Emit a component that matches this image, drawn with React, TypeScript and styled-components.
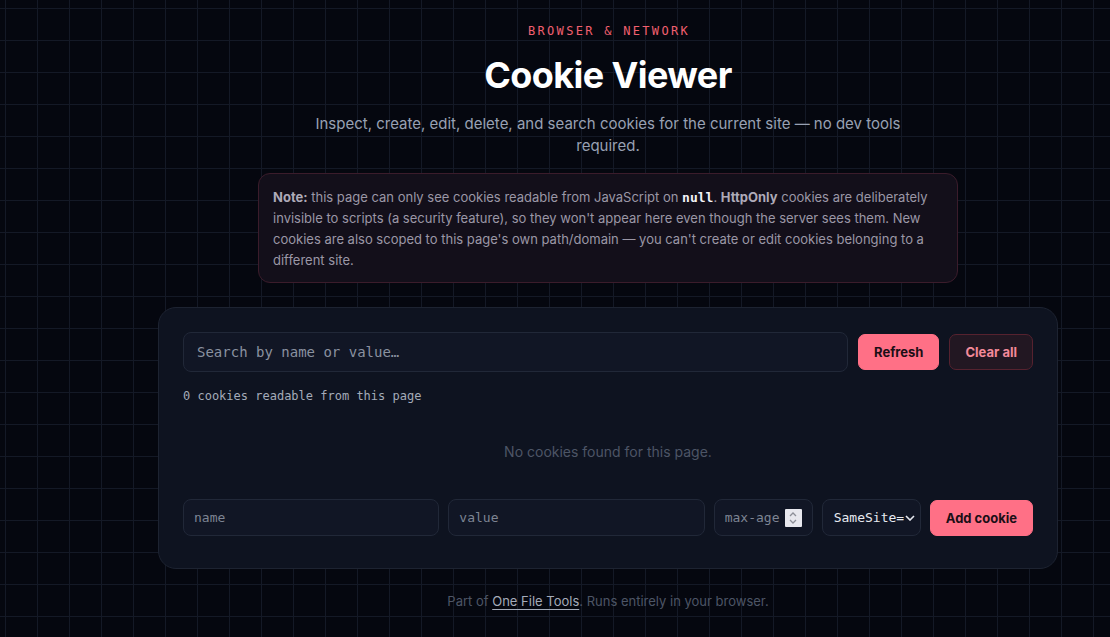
import React from "react";
import styled, { createGlobalStyle } from "styled-components";

const GlobalStyle = createGlobalStyle`
  html, body { margin: 0; padding: 0; }
  body {
    background-color: #05070f;
    background-image:
      linear-gradient(to right, #141926 1px, transparent 1px),
      linear-gradient(to bottom, #141926 1px, transparent 1px);
    background-size: 32px 32px;
    background-position: 5px 8px;
    color: #e6e9f0;
    font-family: Inter, "Noto Sans", sans-serif;
    min-height: 637px;
  }
  * { box-sizing: border-box; }
`;

const mono = `"DejaVu Sans Mono", "Liberation Mono", monospace`;

const Page = styled.main`
  display: flex;
  flex-direction: column;
  align-items: center;
  padding: 23px 0 0 106px;
`;

const Eyebrow = styled.div`
  font-family: ${mono};
  font-size: 12px;
  line-height: 16px;
  letter-spacing: 2.3px;
  padding-left: 2px;
  color: #f2606f;
  font-weight: 400;
`;

const Title = styled.h1`
  margin: 14px 0 0;
  font-size: 36px;
  line-height: 44px;
  font-weight: 700;
  letter-spacing: -0.6px;
  color: #ffffff;
`;

const Subtitle = styled.p`
  margin: 16px 0 0;
  max-width: 600px;
  text-align: center;
  font-size: 15px;
  line-height: 22px;
  color: #98a1b3;
`;

const Note = styled.div`
  margin-top: 16px;
  width: 700px;
  padding: 13px 14px 11px 14px;
  border: 1px solid #3b1c2b;
  border-radius: 12px;
  background: #130f1a;
  font-size: 13px;
  line-height: 21px;
  color: #9b97a6;
  b { color: #aeaab8; font-weight: 700; }
  code {
    font-family: ${mono};
    font-size: 13px;
    line-height: 1;
    color: #f3f3f7;
    font-weight: 700;
  }
`;

const Card = styled.section`
  margin-top: 24px;
  width: 900px;
  padding: 24px 24px 32px;
  border: 1px solid #1d2331;
  border-radius: 18px;
  background: #0e1320;
  display: flex;
  flex-direction: column;
`;

const Toolbar = styled.div`
  display: flex;
  align-items: center;
  gap: 10px;
`;

const SearchInput = styled.input`
  flex: 1;
  height: 40px;
  padding: 0 13px;
  border: 1px solid #212838;
  border-radius: 8px;
  background: #111625;
  color: #e6e9f0;
  font-family: ${mono};
  font-size: 14px;
  outline: none;
  &::placeholder { color: #8a91a0; }
`;

const Button = styled.button<{ $variant?: "primary" | "danger" }>`
  height: 36px;
  padding: 0 15px;
  border-radius: 7px;
  font-family: Inter, sans-serif;
  font-size: 13px;
  font-weight: 700;
  cursor: pointer;
  white-space: nowrap;
  border: 1px solid ${(p) => (p.$variant === "danger" ? "#56222f" : "#ff7086")};
  background: ${(p) => (p.$variant === "danger" ? "#221722" : "#ff7086")};
  color: ${(p) => (p.$variant === "danger" ? "#f38a9a" : "#1b0f16")};
`;

const Count = styled.div`
  margin-top: 15px;
  font-family: ${mono};
  font-size: 12px;
  line-height: 18px;
  color: #a4abb9;
`;

const Empty = styled.div`
  padding: 37px 0 37px;
  text-align: center;
  font-size: 14px;
  line-height: 20px;
  color: #4d5566;
`;

const AddRow = styled.div`
  display: flex;
  align-items: center;
  gap: 9px;
`;

const Field = styled.input<{ $grow?: boolean }>`
  flex: ${(p) => (p.$grow ? "1" : "none")};
  min-width: 0;
  height: 37px;
  padding: 0 10px;
  border: 1px solid #212838;
  border-radius: 8px;
  background: #111625;
  color: #e6e9f0;
  font-family: ${mono};
  font-size: 13px;
  outline: none;
  &::placeholder { color: #7d8493; }
`;

const NumberBox = styled.label`
  flex: none;
  width: 99px;
  height: 37px;
  display: flex;
  align-items: center;
  gap: 4px;
  padding: 0 10px;
  border: 1px solid #212838;
  border-radius: 8px;
  background: #111625;
`;

const NumberInput = styled.input`
  width: 56px;
  border: 0;
  padding: 0;
  background: transparent;
  color: #e6e9f0;
  font-family: ${mono};
  font-size: 13px;
  outline: none;
  &::placeholder { color: #7d8493; }
`;

const Spinner = styled.span`
  width: 18px;
  height: 18px;
  display: flex;
  align-items: center;
  justify-content: center;
  background: #e8e8ee;
  border-radius: 1px;
`;

const Select = styled.select`
  flex: none;
  width: 99px;
  height: 37px;
  padding: 0 16px 0 11px;
  border: 1px solid #212838;
  border-radius: 8px;
  background-color: #111625;
  background-image: url("data:image/svg+xml,%3Csvg xmlns='http://www.w3.org/2000/svg' width='10' height='6' viewBox='0 0 10 6'%3E%3Cpath d='M1 1l4 4 4-4' fill='none' stroke='%23e6e9f0' stroke-width='1.6'/%3E%3C/svg%3E");
  background-repeat: no-repeat;
  background-position: right 5px center;
  appearance: none;
  color: #e6e9f0;
  font-family: ${mono};
  font-size: 13px;
  outline: none;
  overflow: hidden;
`;

const Footer = styled.footer`
  margin-top: 22px;
  font-size: 13px;
  line-height: 20px;
  color: #4d5566;
  a {
    color: #a4abb9;
    text-decoration: underline;
    text-underline-offset: 3px;
  }
`;

export default function App() {
  return (
    <>
      <GlobalStyle />
      <Page>
        <Eyebrow>BROWSER &amp; NETWORK</Eyebrow>
        <Title>Cookie Viewer</Title>
        <Subtitle>
          Inspect, create, edit, delete, and search cookies for the current site — no dev tools required.
        </Subtitle>
        <Note>
          <b>Note:</b> this page can only see cookies readable from JavaScript on <code>null</code>.{" "}
          <b>HttpOnly</b> cookies are deliberately invisible to scripts (a security feature), so they
          won't appear here even though the server sees them. New cookies are also scoped to this
          page's own path/domain — you can't create or edit cookies belonging to a different site.
        </Note>
        <Card>
          <Toolbar>
            <SearchInput placeholder="Search by name or value…" />
            <Button $variant="primary">Refresh</Button>
            <Button $variant="danger">Clear all</Button>
          </Toolbar>
          <Count>0 cookies readable from this page</Count>
          <Empty>No cookies found for this page.</Empty>
          <AddRow>
            <Field $grow placeholder="name" />
            <Field $grow placeholder="value" />
            <NumberBox>
              <NumberInput placeholder="max-age" />
              <Spinner>
                <svg width="10" height="14" viewBox="0 0 10 14" fill="none" stroke="#8d8f98" strokeWidth="1.3">
                  <path d="M2 5l3-3 3 3" />
                  <path d="M2 9l3 3 3-3" />
                </svg>
              </Spinner>
            </NumberBox>
            <Select defaultValue="">
              <option value="">SameSite=Lax</option>
              <option value="Strict">SameSite=Strict</option>
              <option value="None">SameSite=None</option>
            </Select>
            <Button $variant="primary">Add cookie</Button>
          </AddRow>
        </Card>
        <Footer>
          Part of <a href="#">One File Tools</a>. Runs entirely in your browser.
        </Footer>
      </Page>
    </>
  );
}
